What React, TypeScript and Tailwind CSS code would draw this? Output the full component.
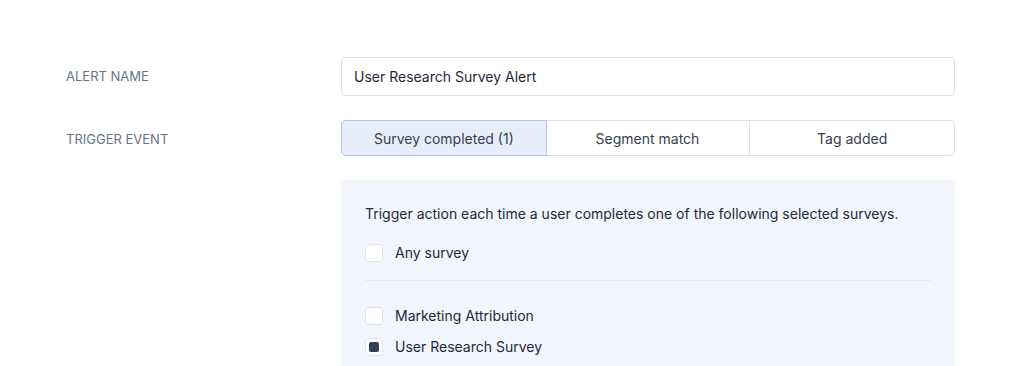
export default function App() {
  const tabs = [
    { label: "Survey completed (1)", active: true },
    { label: "Segment match", active: false },
    { label: "Tag added", active: false },
  ];

  return (
    <div
      className="h-[366px] w-[1024px] overflow-hidden bg-white pl-[66px] pr-[69px] pt-[57px] text-[14px] text-[#1e293b]"
      style={{ fontFamily: "Inter, 'Noto Sans', sans-serif" }}
    >
      {/* Alert name */}
      <div className="flex items-center">
        <div className="w-[275px] pt-px text-[13px] uppercase text-[#687387]">Alert name</div>
        <div className="flex h-[39px] flex-1 items-center rounded-[5px] border border-[#dde1e8] px-[12px] text-[#1e293b]">
          User Research Survey Alert
        </div>
      </div>

      {/* Trigger event */}
      <div className="mt-[24px] flex items-center">
        <div className="w-[275px] pt-[3px] text-[13px] uppercase text-[#687387]">Trigger event</div>
        <div className="flex h-[36px] flex-1 rounded-[5px] border border-[#dde1e8]">
          {tabs.map((t, i) => (
            <div
              key={t.label}
              className={
                t.active
                  ? "-m-px flex flex-1 items-center justify-center rounded-l-[5px] border border-[#adc0f2] bg-[#e8edfa] text-[#334155]"
                  : i === 1
                  ? "flex flex-1 items-center justify-center border-r border-[#dde1e8] text-[#374151]"
                  : "flex flex-1 items-center justify-center text-[#374151]"
              }
            >
              {t.label}
            </div>
          ))}
        </div>
      </div>

      {/* Survey panel */}
      <div className="ml-[275px] mt-[24px] rounded-[6px] bg-[#f3f5fc] px-[24px] pb-[24px] pt-[24px]">
        <p className="leading-[20px] text-[#1e293b]">
          Trigger action each time a user completes one of the following selected surveys.
        </p>
        <label className="mt-[20px] flex h-[18px] items-center gap-[12px] leading-[18px]">
          <span className="h-[18px] w-[18px] rounded-[4px] border border-[#dde1e8] bg-white" />
          <span>Any survey</span>
        </label>
        <div className="mt-[18px] h-px bg-[#e4e7ee]" />
        <label className="mt-[26px] flex h-[18px] items-center gap-[12px] leading-[18px]">
          <span className="h-[18px] w-[18px] rounded-[4px] border border-[#dde1e8] bg-white" />
          <span>Marketing Attribution</span>
        </label>
        <label className="mt-[13px] flex h-[18px] items-center gap-[12px] leading-[18px]">
          <span className="flex h-[18px] w-[18px] items-center justify-center rounded-[4px] border border-[#dde1e8] bg-white">
            <span className="h-[10px] w-[10px] rounded-[2px] bg-[#334155]" />
          </span>
          <span>User Research Survey</span>
        </label>
      </div>
    </div>
  );
}
